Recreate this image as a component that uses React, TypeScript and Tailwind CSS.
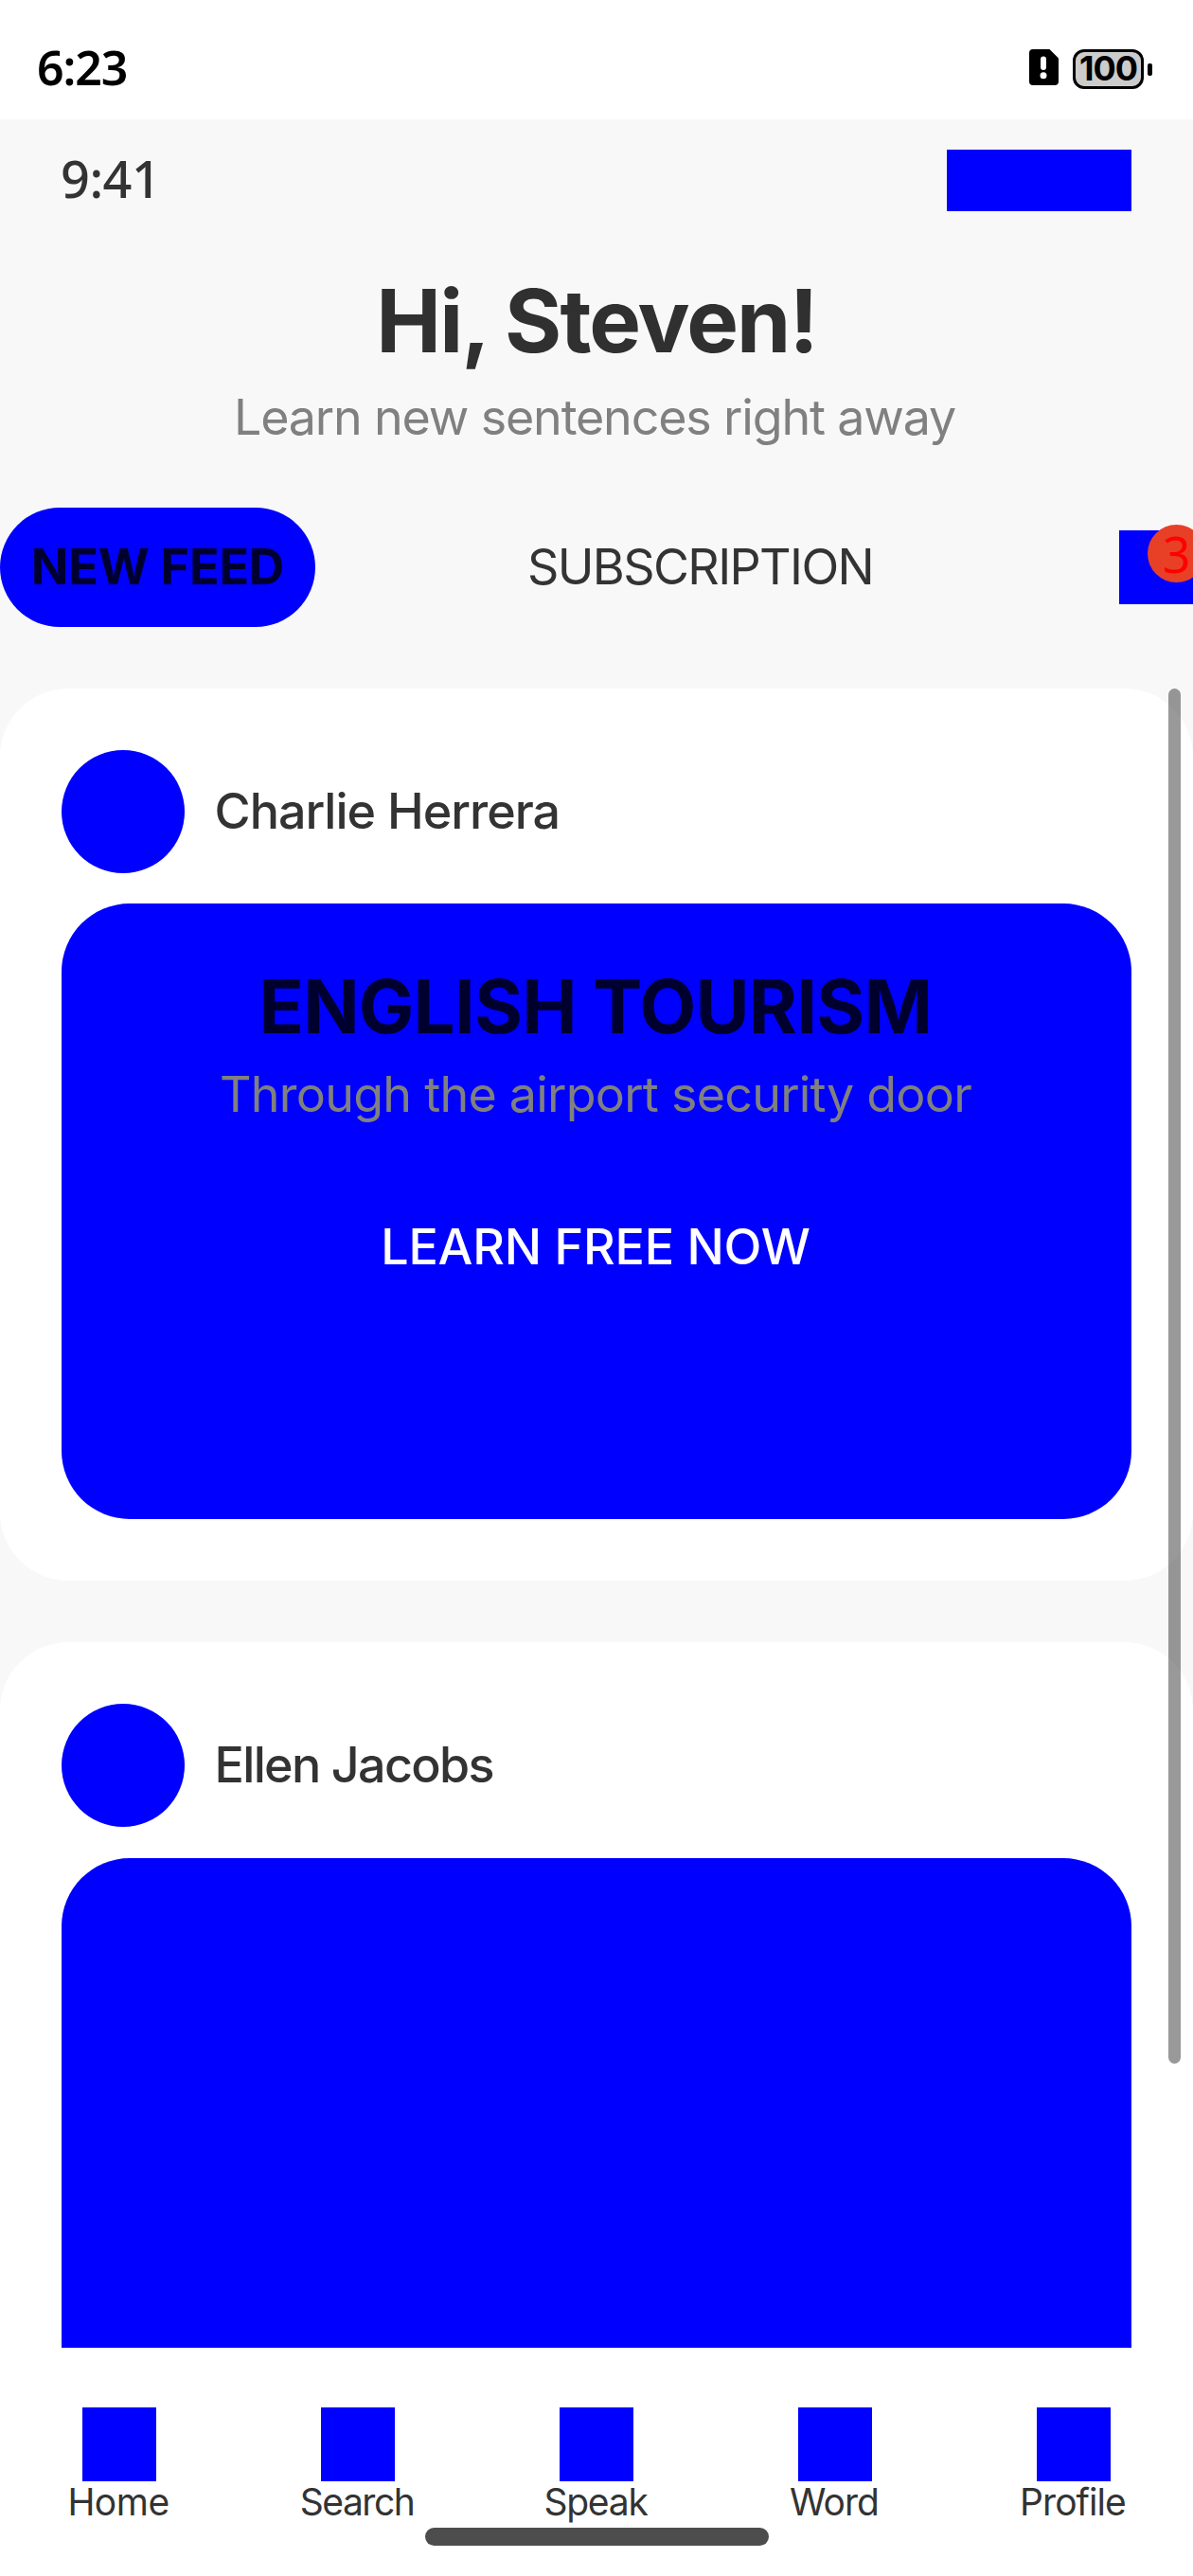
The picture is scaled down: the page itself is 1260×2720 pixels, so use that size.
import type { ReactNode } from "react";

function StatusBar() {
  return (
    <div className="flex h-[126px] items-center bg-white pt-4 pr-[43px] pl-[39px]">
      <span className="font-['Noto_Sans',sans-serif] text-[50px] leading-[58px] font-semibold tracking-[-1.1px] text-black">
        6:23
      </span>
      <svg className="ml-auto h-[38px] w-[31px]" viewBox="0 0 31 38">
        <path d="M4 0H21.5L31 9.5V34a4 4 0 0 1-4 4H4a4 4 0 0 1-4-4V4a4 4 0 0 1 4-4Z" fill="#000" />
        <rect x="12" y="7.5" width="6" height="14.5" rx="3" fill="#fff" />
        <circle cx="15" cy="27.8" r="3.5" fill="#fff" />
      </svg>
      <div className="mt-1 ml-[15px] flex items-center gap-1">
        <div className="flex h-[42px] w-[75px] items-center justify-center rounded-[12px] border-[3px] border-black bg-[#cccccc] pb-[3px] font-['Inter',sans-serif] text-[36px] leading-9 font-bold tracking-[-1px] text-black">
          100
        </div>
        <div className="h-[13px] w-[5px] rounded-[2px] bg-black" />
      </div>
    </div>
  );
}

function Tabs() {
  return (
    <div className="mt-[65px] flex h-[126px] items-center overflow-hidden">
      <div className="flex h-[126px] w-[333px] items-center justify-center rounded-full bg-[#0000ff] text-[52px] leading-[60px] font-bold tracking-[-0.17px] text-[#00002e]">
        NEW FEED
      </div>
      <span className="ml-[224px] text-[52px] leading-[60px] tracking-[-1.62px] text-[#333333]">
        SUBSCRIPTION
      </span>
      <div className="relative ml-auto h-[78px] w-[78px] bg-[#0000ff]">
        <span className="absolute -top-1.5 left-[30px] flex h-[61px] w-[61px] items-center justify-center rounded-full bg-[#e84026] font-['Noto_Sans',sans-serif] text-[52px] leading-[61px] text-[#ff0000]">
          3
        </span>
      </div>
    </div>
  );
}

function FeedCard({ name, children }: { name: ReactNode; children?: ReactNode }) {
  return (
    <div className="shrink-0 rounded-[72px] bg-white p-[65px]">
      <div className="flex items-center gap-[31.5px]">
        <div className="h-[130px] w-[130px] rounded-full bg-[#0000ff]" />
        {name}
      </div>
      <div className="mt-[32.5px] flex h-[650px] flex-col items-center rounded-[72px] bg-[#0000ff] pt-[63px] pr-0.5 whitespace-nowrap">
        {children}
      </div>
    </div>
  );
}

function NavItem({ children }: { children: ReactNode }) {
  return (
    <div className="flex flex-1 flex-col items-center">
      <div className="h-[78px] w-[78px] bg-[#0000ff]" />
      <div className="pr-0.5 text-[39px] leading-[44px] text-[#333333]">{children}</div>
    </div>
  );
}

export default function App() {
  return (
    <div className="flex h-[2720px] w-[1260px] flex-col overflow-hidden bg-[#f8f8f8] font-['Inter',sans-serif]">
      <StatusBar />

      <div className="flex items-center justify-between pt-8 pr-[65px] pl-16">
        <span className="pb-[5px] font-['Noto_Sans',sans-serif] text-[54px] leading-[60px] font-medium tracking-[-0.49px] text-[#333333]">
          9:41
        </span>
        <div className="h-[65px] w-[195px] bg-[#0000ff]" />
      </div>

      <h1 className="mt-[63px] text-center text-[92px] leading-[106px] font-bold tracking-[-1.9px] text-[#303030]">
        Hi, Steven!
      </h1>
      <p className="mt-[19px] pr-1 text-center text-[52px] leading-[60px] tracking-[-1.17px] text-[#808080]">
        Learn new sentences right away
      </p>

      <Tabs />

      <div className="relative mt-[64.5px] flex h-[1752.5px] flex-col gap-[65px] overflow-hidden">
        <FeedCard
          name={<span className="text-[52px] leading-[60px] font-medium tracking-[-1px] text-[#333333]">Charlie Herrera</span>}
        >
          <div className="text-[78px] leading-[92px] font-bold tracking-[-0.8px] text-[#00002e]">ENGLISH TOURISM</div>
          <div className="mt-[17px] text-[52px] leading-[60px] tracking-[-0.76px] text-[#808080]">
            Through the airport security door
          </div>
          <div className="mt-[101px] text-[52px] leading-[60px] font-medium tracking-[-0.2px] text-white">
            LEARN FREE NOW
          </div>
        </FeedCard>
        <FeedCard
          name={<span className="text-[52px] leading-[60px] font-medium tracking-[-1.66px] text-[#333333]">Ellen Jacobs</span>}
        />
        <div className="absolute top-0 right-[13px] h-[1452px] w-[13px] rounded-full bg-black/40" />
      </div>

      <div className="relative flex h-[241px] bg-white pt-[63px]">
        <NavItem>
          <span className="tracking-[-0.51px]">Home</span>
        </NavItem>
        <NavItem>
          <span className="tracking-[-1.47px]">Search</span>
        </NavItem>
        <NavItem>
          <span className="tracking-[-1.23px]">Speak</span>
        </NavItem>
        <NavItem>
          <span className="tracking-[-0.96px]">Word</span>
        </NavItem>
        <NavItem>
          <span className="tracking-[-0.94px]">Profile</span>
        </NavItem>
        <div className="absolute top-[190px] left-[449px] h-[19px] w-[363px] rounded-full bg-[#4d4d4d]" />
      </div>
    </div>
  );
}
